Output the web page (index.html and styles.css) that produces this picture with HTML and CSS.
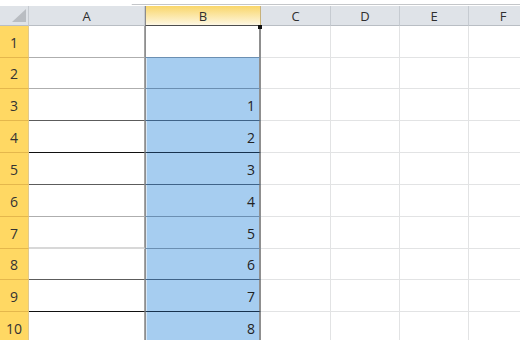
FILE: index.html
```html
<!DOCTYPE html>
<html lang="en">
<head>
    <meta charset="UTF-8">
    <title>Planilha</title>
    <link rel="stylesheet" href="styles.css">
</head>
<body>
    <div class="topbar"><div class="tab"></div></div>

    <div class="sheet">
        <div class="row head">
            <div class="corner"><span class="tri"></span></div>
            <div class="col-head">A</div>
            <div class="col-head sel">B</div>
            <div class="col-head">C</div>
            <div class="col-head">D</div>
            <div class="col-head">E</div>
            <div class="col-head">F</div>
        </div>

        <div class="row">
            <div class="row-head">1</div>
            <div class="cell a grey"></div>
            <div class="cell b active grey"><span class="handle"></span></div>
            <div class="cell"></div><div class="cell"></div><div class="cell"></div><div class="cell"></div>
        </div>
        <div class="row short">
            <div class="row-head">2</div>
            <div class="cell a grey"></div>
            <div class="cell b grey"></div>
            <div class="cell"></div><div class="cell"></div><div class="cell"></div><div class="cell"></div>
        </div>
        <div class="row">
            <div class="row-head">3</div>
            <div class="cell a dark"></div>
            <div class="cell b dark">1</div>
            <div class="cell"></div><div class="cell"></div><div class="cell"></div><div class="cell"></div>
        </div>
        <div class="row">
            <div class="row-head">4</div>
            <div class="cell a black"></div>
            <div class="cell b black">2</div>
            <div class="cell"></div><div class="cell"></div><div class="cell"></div><div class="cell"></div>
        </div>
        <div class="row">
            <div class="row-head">5</div>
            <div class="cell a dark"></div>
            <div class="cell b dark">3</div>
            <div class="cell"></div><div class="cell"></div><div class="cell"></div><div class="cell"></div>
        </div>
        <div class="row">
            <div class="row-head">6</div>
            <div class="cell a grey"></div>
            <div class="cell b grey">4</div>
            <div class="cell"></div><div class="cell"></div><div class="cell"></div><div class="cell"></div>
        </div>
        <div class="row">
            <div class="row-head">7</div>
            <div class="cell a faint"></div>
            <div class="cell b grey">5</div>
            <div class="cell"></div><div class="cell"></div><div class="cell"></div><div class="cell"></div>
        </div>
        <div class="row short">
            <div class="row-head">8</div>
            <div class="cell a dark"></div>
            <div class="cell b dark">6</div>
            <div class="cell"></div><div class="cell"></div><div class="cell"></div><div class="cell"></div>
        </div>
        <div class="row">
            <div class="row-head">9</div>
            <div class="cell a black"></div>
            <div class="cell b black">7</div>
            <div class="cell"></div><div class="cell"></div><div class="cell"></div><div class="cell"></div>
        </div>
        <div class="row">
            <div class="row-head">10</div>
            <div class="cell a"></div>
            <div class="cell b">8</div>
            <div class="cell"></div><div class="cell"></div><div class="cell"></div><div class="cell"></div>
        </div>
    </div>
</body>
</html>
```

FILE: styles.css
```css
* {
    box-sizing: border-box;
}
body {
    margin: 0;
    width: 520px;
    height: 340px;
    overflow: hidden;
    background-color: #fff;
    font-family: "Open Sans", "Noto Sans", sans-serif;
    color: #333;
}
.topbar {
    height: 6px;
    background-color: #eef0f2;
    border-top: 4px solid #fff;
    border-bottom: 1px solid #fff;
    box-shadow: inset 0 1px 0 #c4c6c9;
}
.tab {
    width: 132px;
    height: 1px;
    background-color: #fff;
    border-bottom-right-radius: 3px;
}
.sheet {
    width: 540px;
}
.row {
    display: grid;
    grid-template-columns: 29px 116px 116px 70px 69px 69px 69px;
    height: 32px;
}
.row.short {
    height: 31px;
}
.row.head {
    height: 20px;
}
.corner {
    position: relative;
    background-color: #dfe3e8;
    border-right: 1px solid #c6cbd1;
    border-bottom: 1px solid #b9bec4;
}
.tri {
    position: absolute;
    right: 2px;
    bottom: 3px;
    width: 0;
    height: 0;
    border-left: 14px solid transparent;
    border-bottom: 13px solid #b9bdc2;
}
.col-head {
    display: flex;
    align-items: center;
    justify-content: center;
    background-color: #dfe3e8;
    border-right: 1px solid #c6cbd1;
    border-bottom: 1px solid #b9bec4;
    font-size: 13px;
    color: #2f2f2f;
}
.col-head.sel {
    background: linear-gradient(to bottom, #f9d66a, #fdf2cf 85%, #fef8e6);
    border-right: 1px solid #c8b27a;
    border-bottom: 1px solid #4d4d4d;
    border-left: 1px solid #8c8c8c;
}
.row-head {
    display: flex;
    align-items: flex-end;
    justify-content: center;
    padding-bottom: 5px;
    background-color: #ffd863;
    border-right: 1px solid #e1c98c;
    border-bottom: 1px solid #e4b74c;
    font-size: 14px;
    color: #333;
}
.cell {
    display: flex;
    align-items: flex-end;
    justify-content: flex-end;
    padding: 0 4px 5px 0;
    border-right: 1px solid #e2e3e4;
    border-bottom: 1px solid #e2e3e4;
    font-size: 14px;
    color: #222;
}
.cell.a {
    border-right: 1px solid #a3a3a3;
    border-bottom-color: #e8e8e8;
}
.cell.b {
    background-color: #a6cdf0;
    border-right: 2px solid #8f8f8f;
    border-bottom-color: #a6cdf0;
}
.cell.b.active {
    position: relative;
    background-color: #fff;
    border-left: 1px solid #8f8f8f;
}
.cell.b:not(.active) {
    border-left: 1px solid #8f8f8f;
    box-shadow: inset 1px 0 0 #d6e7f6;
}
.handle {
    position: absolute;
    right: -3px;
    top: -1px;
    width: 4px;
    height: 4px;
    background-color: #111;
}
.cell.a.grey {
    border-bottom-color: #aeaeae;
}
.cell.a.dark {
    border-bottom-color: #5c5c5c;
}
.cell.a.black {
    border-bottom-color: #111;
}
.cell.a.faint {
    border-bottom: 2px solid #d8d8d8;
}
.cell.b.grey {
    border-bottom-color: #6b8fb2;
}
.cell.b.dark {
    border-bottom-color: #3f6388;
}
.cell.b.black {
    border-bottom-color: #16324f;
}
```
